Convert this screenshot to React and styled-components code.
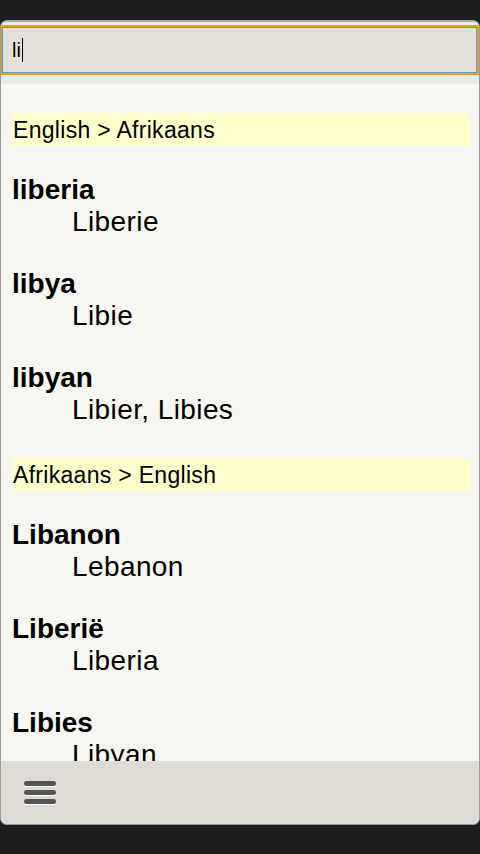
import React from 'react';
import styled, { createGlobalStyle } from 'styled-components';

const GlobalStyle = createGlobalStyle`
  html, body {
    margin: 0;
    padding: 0;
    background: #1e1e1e;
  }
  body {
    font-family: "Liberation Sans", Arial, sans-serif;
  }
`;

const Screen = styled.div`
  width: 480px;
  height: 854px;
  padding-top: 20px;
  box-sizing: border-box;
  background: #1e1e1e;
`;

const Frame = styled.div`
  height: 805px;
  display: flex;
  flex-direction: column;
  background: #f8f6f0;
  border: 1px solid #9a9a9a;
  border-top: 2px solid #a8a8a8;
  border-radius: 7px;
  box-sizing: border-box;
  overflow: hidden;
`;

const SearchArea = styled.div`
  background: #ece9e1;
  padding: 5px 2px 11px 1px;
`;

const SearchBox = styled.div`
  height: 46px;
  box-sizing: border-box;
  background: #e3e0d9;
  border: 1px solid #5a9ec8;
  outline: 2px solid #e8a020;
  display: flex;
  align-items: center;
  padding-left: 9px;
  font-size: 20px;
  color: #000;
`;

const Caret = styled.span`
  display: inline-block;
  width: 1px;
  height: 24px;
  background: #000;
  margin-left: 1px;
`;

const Results = styled.div`
  flex: 1;
  overflow: hidden;
  padding: 29px 9px 0 11px;
`;

const DictHeader = styled.div`
  height: 33px;
  background: #ffffcc;
  font-size: 23px;
  letter-spacing: 0.3px;
  line-height: 34px;
  padding-left: 1px;
  color: #000;
  margin-top: 32px;
  &:first-child {
    margin-top: 0;
  }
`;

const Entry = styled.div`
  margin-top: 30px;
  ${DictHeader} + & {
    margin-top: 28px;
  }
`;

const Term = styled.div`
  font-size: 28px;
  font-weight: bold;
  line-height: 32px;
  color: #000;
`;

const Translation = styled.div`
  font-size: 28px;
  letter-spacing: 0.4px;
  line-height: 32px;
  padding-left: 60px;
  color: #000;
`;

const BottomBar = styled.div`
  height: 63px;
  flex-shrink: 0;
  background: #dedbd4;
  display: flex;
  align-items: center;
  padding-left: 23px;
`;

const MenuButton = styled.div`
  display: flex;
  flex-direction: column;
  gap: 4px;
`;

const MenuBar = styled.span`
  display: block;
  width: 32px;
  height: 5px;
  border-radius: 3px;
  background: #555;
  box-shadow: 0 1px 0 #fff;
`;

const data = [
  {
    title: 'English > Afrikaans',
    entries: [
      ['liberia', 'Liberie'],
      ['libya', 'Libie'],
      ['libyan', 'Libier, Libies'],
    ],
  },
  {
    title: 'Afrikaans > English',
    entries: [
      ['Libanon', 'Lebanon'],
      ['Liberië', 'Liberia'],
      ['Libies', 'Libyan'],
    ],
  },
];

export default function App() {
  return (
    <Screen>
      <GlobalStyle />
      <Frame>
        <SearchArea>
          <SearchBox>
            li<Caret />
          </SearchBox>
        </SearchArea>
        <Results>
          {data.map((dict) => (
            <React.Fragment key={dict.title}>
              <DictHeader>{dict.title}</DictHeader>
              {dict.entries.map(([term, tr]) => (
                <Entry key={term}>
                  <Term>{term}</Term>
                  <Translation>{tr}</Translation>
                </Entry>
              ))}
            </React.Fragment>
          ))}
        </Results>
        <BottomBar>
          <MenuButton>
            <MenuBar />
            <MenuBar />
            <MenuBar />
          </MenuButton>
        </BottomBar>
      </Frame>
    </Screen>
  );
}
